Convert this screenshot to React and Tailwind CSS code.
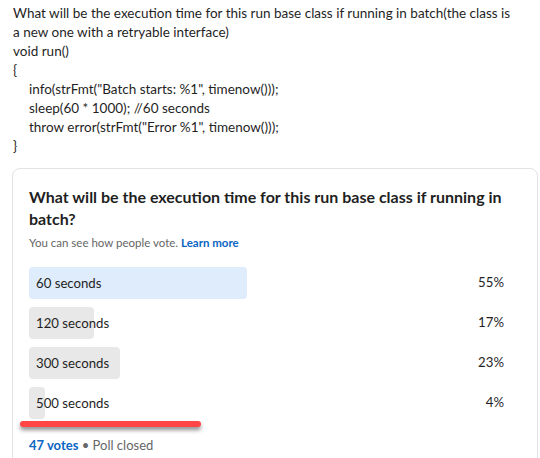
export default function App() {
  const options = [
    { label: "60 seconds", pct: 55, w: 218, top: true },
    { label: "120 seconds", pct: 17, w: 65 },
    { label: "300 seconds", pct: 23, w: 91 },
    { label: "500 seconds", pct: 4, w: 16 },
  ];
  return (
    <div className="w-[540px] h-[458px] overflow-hidden bg-white text-[#1d1d1d]" style={{ fontFamily: 'Lato, "Noto Sans", sans-serif' }}>
      <div className="pl-[13px] pt-[4px] text-[13.5px] leading-[19px] text-[#1f1f1f]">
        <div className="whitespace-nowrap">What will be the execution time for this run base class if running in batch(the class is</div>
        <div className="whitespace-nowrap">a new one with a retryable interface)</div>
        <div>void run()</div>
        <div>{"{"}</div>
        <div className="pl-[16px] whitespace-nowrap">info(strFmt("Batch starts: %1", timenow()));</div>
        <div className="pl-[16px] whitespace-nowrap">sleep(60 * 1000); //60 seconds</div>
        <div className="pl-[16px] whitespace-nowrap">throw error(strFmt("Error %1", timenow()));</div>
        <div>{"}"}</div>
      </div>
      <div className="ml-[12px] mt-[12px] w-[526px] h-[300px] rounded-t-[8px] border border-[#e3e3e3] pl-[16px] pr-[33px] pt-[17px]">
        <div className="text-[16px] leading-[22px] font-bold text-[#1f1f1f]">
          What will be the execution time for this run base class if running in batch?
        </div>
        <div className="mt-[5px] text-[11.5px] leading-[16px] text-[#666666]">
          You can see how people vote. <span className="text-[#0a66c2] font-bold">Learn more</span>
        </div>
        <div className="mt-[16px] flex flex-col gap-[8px]">
          {options.map((o) => (
            <div key={o.label} className="flex items-center h-[32px]">
              <div className="relative w-[396px] h-[32px]">
                <div
                  className={o.top ? "absolute left-0 top-0 h-full rounded-[4px] bg-[#deecfb]" : "absolute left-0 top-0 h-full rounded-[4px] bg-[#e8e8e8]"}
                  style={{ width: o.w }}
                />
                <div className="relative pl-[7px] text-[13.2px] leading-[32px] text-[#1f1f1f]">{o.label}</div>
              </div>
              <div className="flex-1 text-right text-[13.2px] text-[#1f1f1f]">{o.pct}%</div>
            </div>
          ))}
        </div>
        <div className="relative h-0">
          <div className="absolute left-[-9px] top-[2px] w-[181px] h-[6px] rounded-full bg-[#ff4545] shadow-[0_3px_4px_rgba(0,0,0,0.45)]" />
        </div>
        <div className="mt-[16px] text-[13px] leading-[20px]">
          <span className="text-[#0a66c2] font-bold">47 votes</span>
          <span className="text-[#666666]"> • Poll closed</span>
        </div>
      </div>
    </div>
  );
}
